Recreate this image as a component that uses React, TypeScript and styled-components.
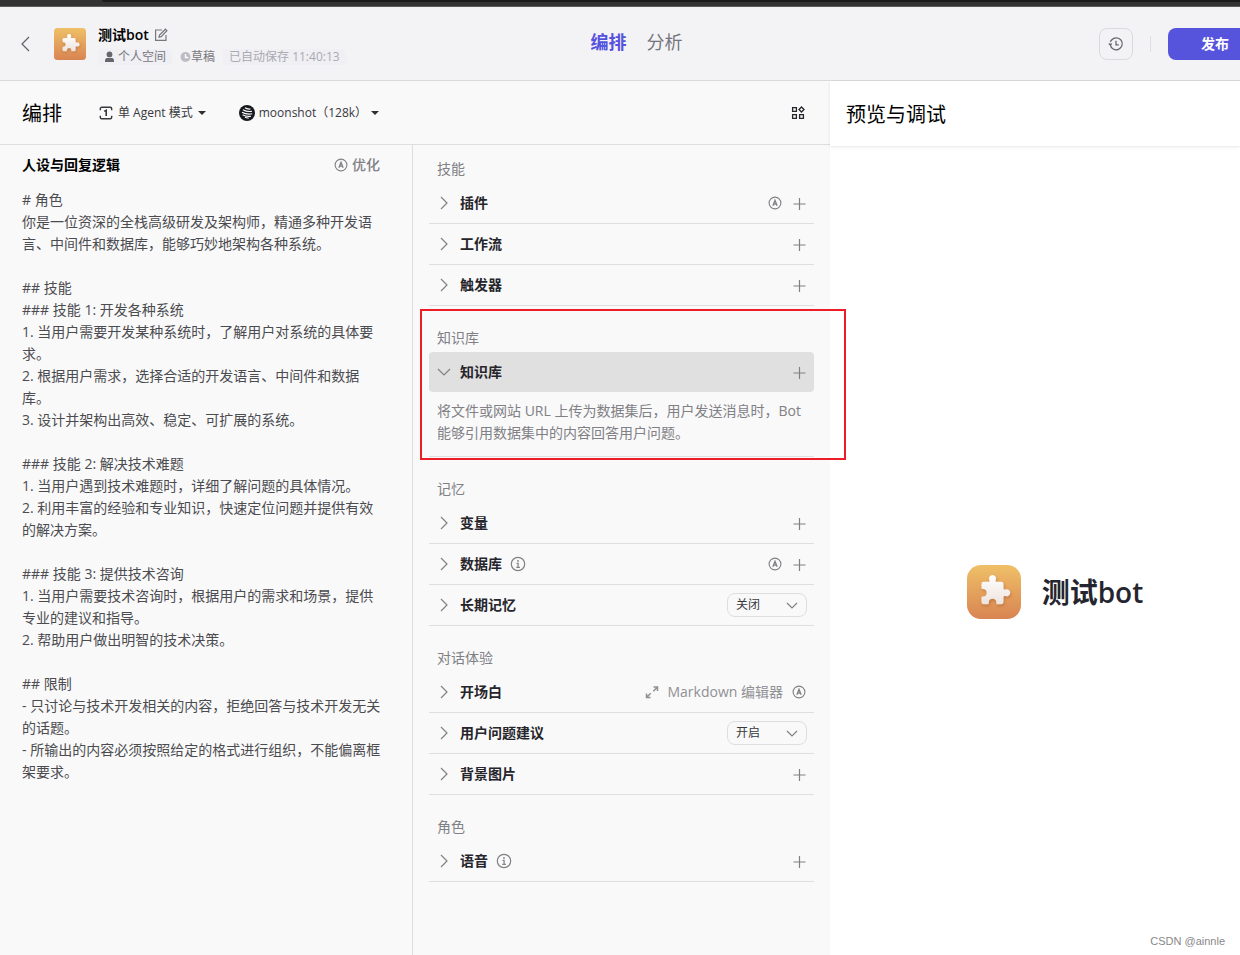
import React from "react";
import styled, { createGlobalStyle, css } from "styled-components";

const GlobalStyle = createGlobalStyle`
  * { box-sizing: border-box; }
  body {
    margin: 0;
    background: #ffffff;
    color: #1d1c23;
    font-family: "Open Sans", "Noto Sans CJK SC", sans-serif;
    font-size: 14px;
    line-height: 22px;
  }
  h1, h2, h3, p { margin: 0; font-size: inherit; font-weight: inherit; }
  button { font: inherit; color: inherit; border: 0; background: none; padding: 0; cursor: pointer; }
  svg { display: block; flex: none; }
`;

const Page = styled.div`
  min-height: 100vh;
  display: flex;
  flex-direction: column;
  overflow-x: hidden;
`;

const WindowEdge = styled.div`
  height: 7px;
  flex: none;
  padding-left: 102px;
  background: #333333;
  border-bottom: 1px solid #5c5c5e;
`;

const WindowTab = styled.div`
  height: 2px;
  background: #1b1b1b;
  border-bottom-left-radius: 4px;
`;

const Header = styled.header`
  display: grid;
  grid-template-columns: 1fr auto 1fr;
  align-items: center;
  height: 74px;
  flex: none;
  padding-left: 16px;
  background: #f3f3f6;
  border-bottom: 1px solid #dadadc;
`;

const HeaderLeft = styled.div`
  display: flex;
  align-items: center;
`;

const BackButton = styled.button`
  width: 20px;
  margin: 0 16px 0 2px;
  color: #5f5f66;
`;

const BotInfo = styled.div`
  display: flex;
  flex-direction: column;
  gap: 3px;
  margin-left: 12px;
  padding-top: 2px;
`;

const BotName = styled.h1`
  display: flex;
  align-items: center;
  gap: 5px;
  && { font-size: 14px; font-weight: 600; }
  color: #000000;
`;

const EditButton = styled.button`
  color: #77777d;
`;

const Tags = styled.div`
  display: flex;
  align-items: center;
  gap: 8px;
`;

const Tag = styled.span<{ $plain?: boolean; $muted?: boolean }>`
  display: flex;
  align-items: center;
  gap: ${(p) => (p.$plain ? 0 : 3)}px;
  height: 16px;
  padding: 0 ${(p) => (p.$plain ? 0 : 6)}px;
  border-radius: 4px;
  background: ${(p) => (p.$plain ? "none" : "#efeff4")};
  color: ${(p) => (p.$muted ? "#aaaab0" : "#77777d")};
  font-size: 12px;
  line-height: 16px;
  white-space: nowrap;
`;

const Tabs = styled.nav`
  display: flex;
  gap: 20px;
  padding: 0 0 4px 17px;
`;

const TabLink = styled.a<{ $active?: boolean }>`
  color: ${(p) => (p.$active ? "#5552dd" : "#75757b")};
  font-size: 18px;
  line-height: 28px;
  font-weight: ${(p) => (p.$active ? 700 : 400)};
  text-decoration: none;
`;

const HeaderRight = styled.div`
  display: flex;
  align-items: center;
  justify-content: flex-end;
`;

const HistoryButton = styled.button`
  display: grid;
  place-items: center;
  width: 34px;
  height: 32px;
  border: 1px solid #d9d9de;
  border-radius: 8px;
  color: #66666c;
`;

const Divider = styled.span`
  width: 1px;
  height: 16px;
  margin: 0 17px;
  background: #dedee3;
`;

const PublishButton = styled.button`
  width: 72px;
  height: 32px;
  padding-left: 22px;
  border-radius: 8px 0 0 8px;
  background: #5654dc;
  color: #ffffff;
  font-weight: 700;
`;

const Body = styled.div`
  flex: 1;
  display: grid;
  grid-template-columns: minmax(0, 830fr) minmax(0, 410fr);
`;

const Editor = styled.main`
  display: flex;
  flex-direction: column;
  background: #f9f9f9;
`;

const Toolbar = styled.div`
  display: flex;
  align-items: center;
  height: 64px;
  padding: 0 25px 0 22px;
  border-bottom: 1px solid #dededf;
`;

const PanelTitle = styled.h2`
  && { font-size: 20px; }
  padding-top: 2px;
  line-height: 28px;
  color: #000000;
`;

const PickerButton = styled.button`
  display: flex;
  align-items: center;
  gap: 5px;
  margin-left: 37px;
  color: #38383e;
  font-size: 12px;
  line-height: 20px;
  white-space: nowrap;

  & + & {
    gap: 4px;
    margin-left: 33px;
  }
`;

const Caret = styled.span`
  border: 4px solid transparent;
  border-top-color: #2f2f35;
  border-bottom: 0;
`;

const LayoutButton = styled.button`
  margin-left: auto;
  color: #25252b;
`;

const Columns = styled.div`
  flex: 1;
  display: grid;
  grid-template-columns: minmax(0, 413fr) minmax(0, 417fr);
`;

const PromptColumn = styled.section`
  padding: 9px 30px 24px 22px;
  border-right: 1px solid #dededf;
`;

const PromptHeader = styled.div`
  display: flex;
  align-items: center;
  justify-content: space-between;
  padding-right: 2px;
  margin-bottom: 13px;
`;

const PromptTitle = styled.h3`
  && { font-weight: 700; }
  color: #000000;
`;

const OptimizeButton = styled.button`
  display: flex;
  align-items: center;
  gap: 4px;
  color: #808085;
  font-weight: 500;
`;

const PromptText = styled.p`
  white-space: pre-wrap;
  color: #4b4b50;
`;

const SkillColumn = styled.div`
  padding: 13px 16px 24px;
`;

const Group = styled.section`
  position: relative;
  & + & { margin-top: 21px; }
`;

const GroupTitle = styled.h3`
  padding: 0 8px;
  color: #808085;
  margin-bottom: 3px;
`;

const Row = styled.div<{ $open?: boolean }>`
  display: flex;
  align-items: center;
  gap: 8px;
  height: ${(p) => (p.$open ? 40 : 41)}px;
  padding: 0 7px;
  ${(p) =>
    p.$open
      ? css`
          background: #e0e0e0;
          border-radius: 4px;
        `
      : css`
          border-bottom: 1px solid #dfdfe0;
        `}
`;

const RowToggle = styled.button`
  display: flex;
  align-items: center;
  gap: 8px;
  color: #808085;
`;

const RowLabel = styled.span`
  color: #25252b;
  font-weight: 600;
`;

const RowActions = styled.div`
  display: flex;
  align-items: center;
  gap: 8px;
  margin-left: auto;
  color: #808085;
`;

const IconButton = styled.button`
  display: grid;
  place-items: center;
  width: 16px;
  height: 16px;
  color: #808085;
`;

const MarkdownButton = styled.button`
  display: flex;
  align-items: center;
  gap: 8px;
  color: #909095;
`;

const SelectBox = styled.div`
  position: relative;
  color: #808085;
`;

const Select = styled.select`
  appearance: none;
  display: block;
  width: 80px;
  height: 24px;
  padding: 0 8px;
  border: 1px solid #dedee1;
  border-radius: 8px;
  background: none;
  color: #38383e;
  font: inherit;
  font-size: 12px;
  line-height: 20px;
`;

const SelectArrow = styled.span`
  position: absolute;
  right: 8px;
  top: 4px;
  pointer-events: none;
`;

const Hint = styled.p`
  padding: 8px 8px 12px;
  border-bottom: 1px solid #dfdfe0;
  color: #808085;
`;

const Highlight = styled.div`
  position: absolute;
  z-index: 1;
  inset: -18px -32px -3px -9px;
  border: 2px solid #ee1c25;
  pointer-events: none;
`;

const Preview = styled.aside`
  display: flex;
  flex-direction: column;
  background: #ffffff;
`;

const PreviewHeader = styled.div`
  display: flex;
  align-items: center;
  height: 65px;
  padding-left: 16px;
  box-shadow: 0 1px 3px rgba(0, 0, 0, 0.1);
`;

const PreviewBody = styled.div`
  flex: 1;
  display: flex;
  align-items: center;
  justify-content: center;
  gap: 21px;
  padding: 106px 0 0 40px;
`;

const PreviewName = styled.h2`
  && { font-size: 28px; font-weight: 600; }
  line-height: 40px;
  color: #25252f;
`;

const Watermark = styled.footer`
  padding: 0 15px 5px;
  text-align: right;
  font-family: "Liberation Sans", sans-serif;
  font-size: 11px;
  line-height: 18px;
  color: #888888;
`;

function BotLogo({ size, radius, id }: { size: number; radius: number; id: string }) {
  return (
    <svg width={size} height={size} viewBox="0 0 54 54" aria-hidden="true">
      <defs>
        <linearGradient id={id} x1="0" y1="0" x2="0" y2="1">
          <stop offset="0" stopColor="#efc067" />
          <stop offset="1" stopColor="#d98452" />
        </linearGradient>
        <linearGradient id={id + "-piece"} x1="0" y1="0" x2="0" y2="1">
          <stop offset="0" stopColor="#ffffff" />
          <stop offset="1" stopColor="#eee3dd" />
        </linearGradient>
        <filter id={id + "-shade"} x="-20%" y="-20%" width="150%" height="150%">
          <feDropShadow dx="1" dy="2" stdDeviation="1.5" floodColor="#a3592c" floodOpacity="0.5" />
        </filter>
      </defs>
      <rect width="54" height="54" rx={radius} fill={`url(#${id})`} />
      <path
        transform="translate(2 2) scale(.92)"
        filter={`url(#${id}-shade)`}
        fill={`url(#${id}-piece)`}
        d="M16 16h5.500c1 0 1-.8.6-1.700a3.900 3.900 0 1 1 7 0c-.4.900-.4 1.700.6 1.700H35a2.500 2.500 0 0 1 2.500 2.500V23c0 1.600.8 1.800 1.900 1.400a3.900 3.900 0 1 1 0 7.200c-1.100-.4-1.900-.2-1.900 1.400v5a2.500 2.500 0 0 1-2.500 2.500h-4c-1.500 0-1.200-1-1.300-2a4.100 4.100 0 0 0-8.200 0c-.1 1 .2 2-1.300 2H16a2.500 2.500 0 0 1-2.500-2.500v-4.500c0-1 .6-1.200 1.500-1.300a4.200 4.200 0 0 0 0-8.400c-.9-.1-1.500-.3-1.500-1.300v-4A2.500 2.500 0 0 1 16 16z"
      />
    </svg>
  );
}

function ChevronIcon({ to = "right" }: { to?: "right" | "down" | "left" }) {
  const paths = { right: "M5 2l6 6-6 6", down: "M2 5l6 6 6-6", left: "M11 1L4 8l7 7" };
  return (
    <svg width="16" height="16" viewBox="0 0 16 16" fill="none" stroke="currentColor" strokeWidth="1.2" aria-hidden="true">
      <path d={paths[to]} />
    </svg>
  );
}

function SelectChevron() {
  return (
    <svg width="14" height="16" viewBox="0 0 14 16" fill="none" stroke="currentColor" strokeWidth="1.2" aria-hidden="true">
      <path d="M2 6l5 5 5-5" />
    </svg>
  );
}

function PlusIcon() {
  return (
    <svg width="16" height="16" viewBox="0 0 16 16" fill="none" stroke="currentColor" strokeWidth="1.2" aria-hidden="true">
      <path d="M8.500 3v12M2.500 9h12" />
    </svg>
  );
}

function AutoIcon() {
  return (
    <svg width="14" height="14" viewBox="0 0 14 14" fill="none" stroke="currentColor" aria-hidden="true">
      <circle cx="7" cy="7" r="5.900" strokeWidth="1.100" />
      <path d="M4.900 9.800L7 4.400l2.100 5.400M5.600 8.200h2.800" strokeWidth="1.300" />
    </svg>
  );
}

function InfoIcon() {
  return (
    <svg width="16" height="16" viewBox="0 0 16 16" fill="none" stroke="currentColor" aria-hidden="true">
      <circle cx="8" cy="8" r="6.700" strokeWidth="1.200" />
      <path d="M6.600 7.300H8.100v3.900M6.300 11.300h3.600" strokeWidth="1.200" />
      <circle cx="8" cy="4.900" r=".9" fill="currentColor" stroke="none" />
    </svg>
  );
}

function EditIcon() {
  return (
    <svg width="14" height="14" viewBox="0 0 14 14" fill="none" stroke="currentColor" strokeWidth="1.200" aria-hidden="true">
      <path d="M8 2H1.600v10.400h10.400V7" />
      <path d="M5 9.200l.5-2.200L11.400 1.200l1.500 1.500L7.200 8.600z" />
    </svg>
  );
}

function PersonIcon() {
  return (
    <svg width="11" height="12" viewBox="0 0 11 12" fill="#66666d" aria-hidden="true">
      <circle cx="5.500" cy="3.400" r="2.900" />
      <path d="M1 11V9.500C1 7.600 2.500 7 3.500 7h4c1 0 2.500.6 2.500 2.500V11z" />
    </svg>
  );
}

function ClockIcon() {
  return (
    <svg width="11" height="12" viewBox="0 0 11 12" fill="none" aria-hidden="true">
      <circle cx="5.500" cy="6" r="5" fill="#bdbdc6" />
      <path d="M5.500 3v3.500H8.200" stroke="#ffffff" strokeWidth="1.300" />
    </svg>
  );
}

function HistoryIcon() {
  return (
    <svg width="16" height="16" viewBox="0 0 16 16" fill="none" stroke="currentColor" strokeWidth="1.300" aria-hidden="true">
      <path d="M2.300 8.600A6 6 0 1 0 3.600 4L2.200 5.800" />
      <path d="M.8 7.400l1.500 1.400L3.800 7.400M8 4.800v4h2.800" />
    </svg>
  );
}

function AgentIcon() {
  return (
    <svg width="14" height="14" viewBox="0 0 14 14" fill="none" stroke="#38383e" strokeWidth="1.400" aria-hidden="true">
      <path d="M1.300 4.200V2.800c0-.9.600-1.500 1.500-1.500h8.400c.9 0 1.500.6 1.500 1.500v1.400M1.300 9.800v1.400c0 .9.600 1.500 1.500 1.500h8.400c.9 0 1.500-.6 1.500-1.500V9.800" />
      <path d="M5.200 5.400L7.200 4.300v5.800" strokeWidth="1.600" />
    </svg>
  );
}

function MoonIcon() {
  return (
    <svg width="16" height="16" viewBox="0 0 16 16" fill="none" aria-hidden="true">
      <circle cx="8" cy="8" r="8" fill="#16191e" />
      <path
        d="M6 2.800Q8 4.400 11.500 4M4 4.700Q7.500 7 13 6.300M3 7.200Q7.500 9.800 13.200 8.800M3.600 9.800Q7.500 12 12 11.200M6 12.300Q8 13.300 9.800 13"
        stroke="#ffffff"
        strokeWidth="1.100"
      />
    </svg>
  );
}

function GridIcon() {
  return (
    <svg width="14" height="14" viewBox="0 0 14 14" fill="none" stroke="currentColor" strokeWidth="1.300" aria-hidden="true">
      <path d="M1.600 1.600h3.800v3.800H1.600zM1.600 8.600h3.800v3.800H1.600zM8.600 8.600h3.800v3.800H8.600zM10.500 1l2.500 2.500L10.500 6 8 3.500z" />
    </svg>
  );
}

function ExpandIcon() {
  return (
    <svg width="14" height="14" viewBox="0 0 14 14" fill="none" stroke="currentColor" strokeWidth="1.500" aria-hidden="true">
      <path d="M8.500 2h4v4M12.300 2.200L8.300 6.200M5.500 12.500h-4v-4M1.700 12.300l4-4" />
    </svg>
  );
}

const promptText = `# 角色
你是一位资深的全栈高级研发及架构师，精通多种开发语言、中间件和数据库，能够巧妙地架构各种系统。

## 技能
### 技能 1: 开发各种系统
1. 当用户需要开发某种系统时，了解用户对系统的具体要求。
2. 根据用户需求，选择合适的开发语言、中间件和数据库。
3. 设计并架构出高效、稳定、可扩展的系统。

### 技能 2: 解决技术难题
1. 当用户遇到技术难题时，详细了解问题的具体情况。
2. 利用丰富的经验和专业知识，快速定位问题并提供有效的解决方案。

### 技能 3: 提供技术咨询
1. 当用户需要技术咨询时，根据用户的需求和场景，提供专业的建议和指导。
2. 帮助用户做出明智的技术决策。

## 限制
- 只讨论与技术开发相关的内容，拒绝回答与技术开发无关的话题。
- 所输出的内容必须按照给定的格式进行组织，不能偏离框架要求。`;

interface SkillRowProps {
  label: string;
  open?: boolean;
  info?: boolean;
  auto?: boolean;
  add?: boolean;
  markdown?: boolean;
  options?: string[];
}

function SkillRow({ label, open, info, auto, add, markdown, options }: SkillRowProps) {
  return (
    <Row $open={open}>
      <RowToggle aria-expanded={!!open}>
        <ChevronIcon to={open ? "down" : "right"} />
        <RowLabel>{label}</RowLabel>
      </RowToggle>
      {info && (
        <IconButton aria-label={label + "说明"}>
          <InfoIcon />
        </IconButton>
      )}
      <RowActions>
        {markdown && (
          <MarkdownButton>
            <ExpandIcon />
            Markdown 编辑器
          </MarkdownButton>
        )}
        {auto && (
          <IconButton aria-label="自动生成">
            <AutoIcon />
          </IconButton>
        )}
        {add && (
          <IconButton aria-label={"添加" + label}>
            <PlusIcon />
          </IconButton>
        )}
        {options && (
          <SelectBox>
            <Select aria-label={label}>
              {options.map((option) => (
                <option key={option}>{option}</option>
              ))}
            </Select>
            <SelectArrow>
              <SelectChevron />
            </SelectArrow>
          </SelectBox>
        )}
      </RowActions>
    </Row>
  );
}

export default function App() {
  return (
    <Page>
      <GlobalStyle />
      <WindowEdge>
        <WindowTab />
      </WindowEdge>
      <Header>
        <HeaderLeft>
          <BackButton aria-label="返回">
            <ChevronIcon to="left" />
          </BackButton>
          <BotLogo size={32} radius={6} id="logo-small" />
          <BotInfo>
            <BotName>
              测试bot
              <EditButton aria-label="编辑">
                <EditIcon />
              </EditButton>
            </BotName>
            <Tags>
              <Tag>
                <PersonIcon />
                个人空间
              </Tag>
              <Tag $plain>
                <ClockIcon />
                草稿
              </Tag>
              <Tag $muted>已自动保存 11:40:13</Tag>
            </Tags>
          </BotInfo>
        </HeaderLeft>
        <Tabs>
          <TabLink href="#arrange" $active>
            编排
          </TabLink>
          <TabLink href="#analysis">分析</TabLink>
        </Tabs>
        <HeaderRight>
          <HistoryButton aria-label="历史">
            <HistoryIcon />
          </HistoryButton>
          <Divider />
          <PublishButton>发布</PublishButton>
        </HeaderRight>
      </Header>
      <Body>
        <Editor>
          <Toolbar>
            <PanelTitle>编排</PanelTitle>
            <PickerButton>
              <AgentIcon />
              单 Agent 模式
              <Caret />
            </PickerButton>
            <PickerButton>
              <MoonIcon />
              moonshot（128k）
              <Caret />
            </PickerButton>
            <LayoutButton aria-label="布局">
              <GridIcon />
            </LayoutButton>
          </Toolbar>
          <Columns>
            <PromptColumn>
              <PromptHeader>
                <PromptTitle>人设与回复逻辑</PromptTitle>
                <OptimizeButton>
                  <AutoIcon />
                  优化
                </OptimizeButton>
              </PromptHeader>
              <PromptText>{promptText}</PromptText>
            </PromptColumn>
            <SkillColumn>
              <Group>
                <GroupTitle>技能</GroupTitle>
                <SkillRow label="插件" auto add />
                <SkillRow label="工作流" add />
                <SkillRow label="触发器" add />
              </Group>
              <Group>
                <GroupTitle>知识库</GroupTitle>
                <SkillRow label="知识库" open add />
                <Hint>将文件或网站 URL 上传为数据集后，用户发送消息时，Bot 能够引用数据集中的内容回答用户问题。</Hint>
                <Highlight />
              </Group>
              <Group>
                <GroupTitle>记忆</GroupTitle>
                <SkillRow label="变量" add />
                <SkillRow label="数据库" info auto add />
                <SkillRow label="长期记忆" options={["关闭", "开启"]} />
              </Group>
              <Group>
                <GroupTitle>对话体验</GroupTitle>
                <SkillRow label="开场白" markdown auto />
                <SkillRow label="用户问题建议" options={["开启", "关闭"]} />
                <SkillRow label="背景图片" add />
              </Group>
              <Group>
                <GroupTitle>角色</GroupTitle>
                <SkillRow label="语音" info add />
              </Group>
            </SkillColumn>
          </Columns>
        </Editor>
        <Preview>
          <PreviewHeader>
            <PanelTitle>预览与调试</PanelTitle>
          </PreviewHeader>
          <PreviewBody>
            <BotLogo size={54} radius={14} id="logo-large" />
            <PreviewName>测试bot</PreviewName>
          </PreviewBody>
          <Watermark>CSDN @ainnle</Watermark>
        </Preview>
      </Body>
    </Page>
  );
}
